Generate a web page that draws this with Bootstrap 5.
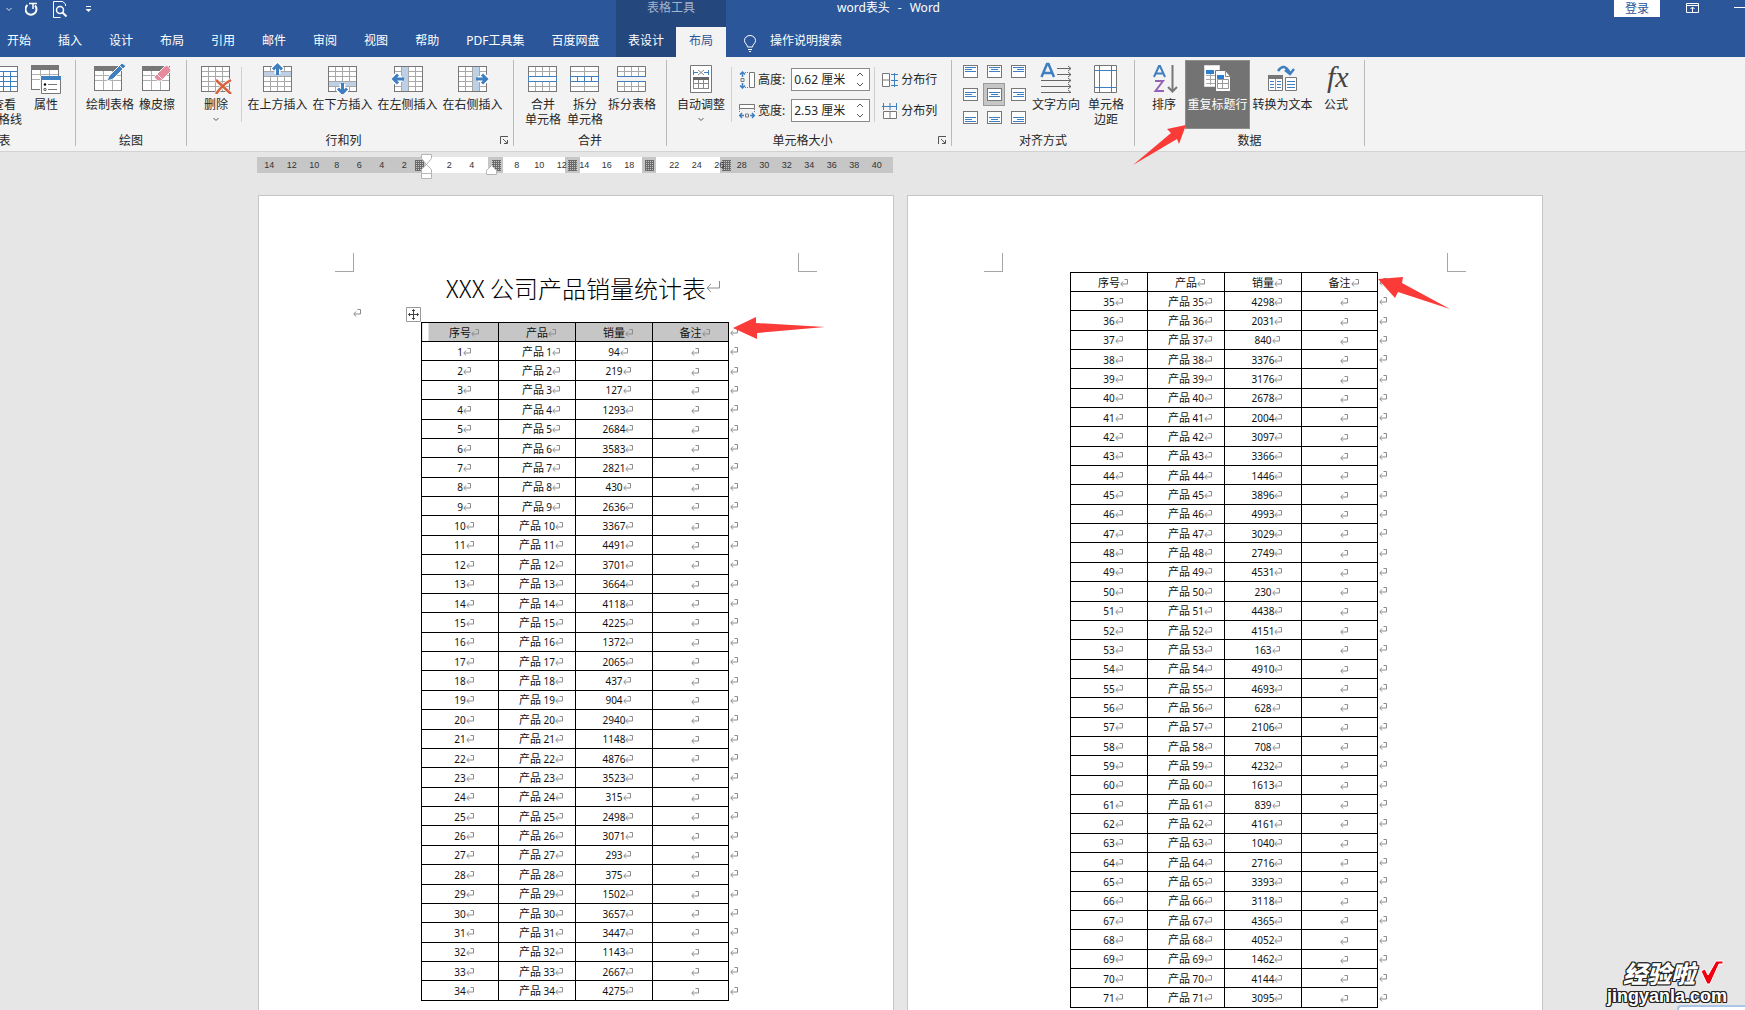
<!DOCTYPE html>
<html lang="zh-CN">
<head>
<meta charset="utf-8">
<meta name="viewport" content="width=device-width, initial-scale=1">
<title>word表头 - Word</title>
<link rel="stylesheet" href="https://cdn.jsdelivr.net/npm/bootstrap@5.3.0/dist/css/bootstrap.min.css">
<style>
body{font-family:"Noto Sans","Noto Sans CJK SC",sans-serif;font-size:12px;line-height:15px;color:#262626;background:#e6e6e6;height:100vh}
svg{display:block;flex:none}
button{border:0;background:none;padding:0;color:inherit;font:inherit}
.w-head{background:#2b579a;color:#fff;flex:none}
.w-left{width:616px}
.w-top{height:27px}
.w-quick{height:18px;padding-left:5px;gap:12px}
.w-tabs{height:30px;gap:27px;padding-left:7px}
.w-tabs a,.w-ctx a,.w-ask{color:#fff;text-decoration:none;white-space:nowrap;line-height:28px}
.w-ctx{background:#24477d}
.w-ctxname{color:#a5b4cd;line-height:15px}
.w-ctx a{padding:0 12px;height:30px}
.w-ctx a.w-on{background:#f3f3f3;color:#2b579a;padding:0 13px}
.w-doc{padding-left:111px;line-height:16px}
.w-ask{padding-left:18px;gap:14px}
.w-login{background:#fff;color:#2b579a;width:46px;height:17px;line-height:16px;margin-right:26px}
.w-min{margin-left:35px}
.w-ribbon{background:#f3f3f3;border-bottom:1px solid #d2d2d2;padding:3px 0 5px;overflow:hidden;flex:none}
.w-strip{margin-left:-66px}
.w-group{height:86px;border-right:1px solid #bababa;flex:none}
.w-body{height:71px}
.w-name{height:15px;line-height:19px}
.w-cmd{height:69px;padding-top:2px;flex:none;white-space:nowrap;display:flex;flex-direction:column;align-items:center;line-height:15px}
.w-cmd svg:first-child{margin-bottom:3px}
.w-42{width:42px}.w-52{width:52px}.w-65{width:65px}.w-48{width:48px}
.w-hot{background:#737373;color:#fff;border:1px solid #8e8e8e;padding-top:1px}
.w-rule{width:1px;height:55px;background:#d0d0d0;margin:7px 7px 0 4px;flex:none}
.w-rule2{margin:7px 3px 0 4px}
.w-size{width:79px;height:23px;border:1px solid #8a8a8a;background:#fff}
.w-size input{border:0;outline:0;width:60px;padding:0 0 0 2px;background:none;color:#262626}
.w-line{height:23px;gap:3px}
.w-line label{margin-right:3px}
.w-align{display:grid;grid-template-columns:repeat(3,24px);grid-auto-rows:23px;margin-left:6px}
.w-align button{display:flex;align-items:center;justify-content:center;width:22px;height:23px;margin-left:1px}
.w-align .w-sel{background:#c6c6c6;border:1px solid #9a9a9a}
.w-work{padding-left:56px;overflow:hidden;min-height:0}
.w-sheets{width:1285px}
.w-ruler{width:636px;height:16px;margin:5px 0 22px -1px;background:#c6c6c6;position:relative}
.w-ruler>svg{position:absolute;left:0;top:-3px}
.w-nums{position:relative;display:grid;grid-template-columns:repeat(28,1fr);padding:0 5px 0 1px;text-align:center;font:9px/17px "Liberation Sans",sans-serif;color:#333}
.w-page{width:636px;height:900px;background:#fff;border:1px solid #c6c6c6;padding-top:57px;flex:none}
.w-corners{padding:0 76px}
.w-corner{width:19px;height:19px;border-bottom:1px solid #a6a6a6}
.w-cl{border-right:1px solid #a6a6a6}.w-cr{border-left:1px solid #a6a6a6}
.w-page h1{font:300 24px/31px "Noto Sans CJK SC",sans-serif;color:#000;margin:0;padding-left:14px;height:34px}
.w-anchor{height:16px;padding-left:94px;gap:45px}
.w-data{margin-left:162px;border-collapse:collapse;font:11px/15px "Noto Sans CJK SC",sans-serif;color:#111;table-layout:fixed;width:320px;text-align:center}
.w-data th,.w-data td{border:1px solid #000;padding:1px 0 0 8px;font-weight:400;white-space:nowrap;height:16px}
.w-data th{height:19px}
.w-data .w-end{border:0;border-left:1px solid #000;padding:0 0 1px 1px;text-align:left}
.w-data svg{display:inline-block;vertical-align:0}
.w-num{font:10px/15px "Noto Sans",sans-serif}
.w-tall1{height:679px}.w-tall2{height:736px}
.w-picked th:not(.w-end){background:#c6c6c6}
.w-picked th:first-child{background:linear-gradient(90deg,#fff 6px,#c6c6c6 6px)}
.w-arrows{position:absolute;left:0;top:0;pointer-events:none}
.w-brand{position:absolute;right:14px;bottom:4px;width:124px;color:#fff;text-shadow:-1px -1px 0 #222,1px -1px 0 #222,-1px 1px 0 #222,1px 1px 0 #222,0 -1px 0 #222,0 1px 0 #222,-1px 0 0 #222,1px 0 0 #222}
.w-brand b{font:italic 900 24px/26px "Noto Sans CJK SC",sans-serif;margin-left:16px}
.w-brand span{font:700 18px/20px "Liberation Sans",sans-serif}
.w-tip{position:absolute;right:0;bottom:0;width:68px;height:5px;background:#fff;border:2px solid #a9c6e8;border-width:2px 0 0 2px;border-radius:4px 0 0 0}
</style>
</head>
<body class="d-flex flex-column overflow-hidden position-relative">
<svg width="0" height="0" class="position-absolute">
<defs>
<symbol id="grid" viewBox="0 0 32 32"><rect x="1.500" y="4.500" width="28" height="25" fill="#fff"/><path d="M8.500 5v24M15.500 5v24M22.500 5v24M2 9.500h27M2 14.500h27M2 19.500h27M2 24.500h27" stroke="#a8a8a8" fill="none"/><rect x="1.500" y="4.500" width="28" height="25" fill="none" stroke="#777"/></symbol>
<symbol id="tbl" viewBox="0 0 32 32"><rect x="1.500" y="4.500" width="27" height="24" fill="#fff"/><path d="M10.500 8v20M19.500 8v20M2 13.500h26M2 18.500h26" stroke="#b0b0b0" fill="none"/><rect x="1.500" y="4.500" width="27" height="24" fill="none" stroke="#777"/><path d="M1 4h28v5H1z" fill="#777"/></symbol>
<symbol id="ret" viewBox="0 0 8 8"><path d="M4.500.5h3v4.500H1M3 2.500L.8 5 3 7.500" fill="none" stroke="#8c8c8c"/></symbol>
<symbol id="dn" viewBox="0 0 8 15"><path d="M1.500 6L4 8.500 6.500 6" fill="none" stroke="#555"/></symbol>
<symbol id="spin" viewBox="0 0 8 21"><path d="M1 7l3-3 3 3M1 14l3 3 3-3" fill="none" stroke="#555"/></symbol>
<symbol id="launch" viewBox="0 0 9 9"><path d="M.5 8V.5H8M3 3l4 4M7.500 4v3.500H4" fill="none" stroke="#555"/></symbol>
<symbol id="cell" viewBox="0 0 15 13"><rect x=".5" y=".5" width="14" height="12" fill="#fff" stroke="#777"/></symbol>
<pattern id="dots" width="2" height="2" patternUnits="userSpaceOnUse"><path d="M0 .5h2M.5 0v2" stroke="#6a6a6a"/></pattern>
</defs></svg>

<header class="w-head d-flex">
  <div class="w-left">
    <div class="w-top"><div class="w-quick d-flex align-items-center">
      <svg width="8" height="15"><path d="M1.500 6L4 8.500 6.500 6" fill="none" stroke="#dfe6f1"/></svg>
      <button type="button" aria-label="重做"><svg width="15" height="16" viewBox="0 0 15 16"><path d="M2.500 4A5.500 5.500 0 1 0 10 4.500" fill="none" stroke="#fff" stroke-width="2"/><path d="M4 2.500h8M8 2v6" fill="none" stroke="#fff" stroke-width="1.500"/></svg></button>
      <button type="button" aria-label="打印预览"><svg width="19" height="18" viewBox="-1 0 19 18"><path d="M12.500 6V4l-3-2.500H.5v16h7" fill="none" stroke="#fff"/><circle cx="7" cy="10" r="3.500" fill="none" stroke="#fff" stroke-width="1.500"/><path d="M9.500 12.500l4 4" stroke="#fff" stroke-width="2"/></svg></button>
      <button type="button" aria-label="自定义快速访问工具栏"><svg width="11" height="9"><path d="M3 1.500h5" stroke="#fff"/><path d="M2.500 4h6L5.500 7z" fill="#fff"/></svg></button>
    </div></div>
    <nav class="w-tabs d-flex">
      <a href="#">开始</a><a href="#">插入</a><a href="#">设计</a><a href="#">布局</a><a href="#">引用</a><a href="#">邮件</a><a href="#">审阅</a><a href="#">视图</a><a href="#">帮助</a><a href="#">PDF工具集</a><a href="#">百度网盘</a>
    </nav>
  </div>
  <div class="w-ctx">
    <div class="w-top w-ctxname text-center">表格工具</div>
    <nav class="d-flex"><a href="#">表设计</a><a href="#" class="w-on">布局</a></nav>
  </div>
  <div class="flex-fill">
    <div class="w-top d-flex">
      <div class="w-doc">word表头<span class="mx-2">-</span>Word</div>
      <button type="button" class="w-login ms-auto">登录</button>
      <button type="button" aria-label="功能区显示选项" class="align-self-start"><svg width="13" height="14" viewBox="0 0 13 14"><path d="M.5 3.500h12v9H.5zM1 5.500h11M6.500 12V7.500M4.500 9l2-2 2 2" fill="none" stroke="#fff"/></svg></button>
      <button type="button" aria-label="最小化" class="w-min align-self-start"><svg width="11" height="14"><path d="M0 7.500h11" stroke="#fff"/></svg></button>
    </div>
    <a href="#" class="w-ask d-flex"><svg class="mt-2" width="12" height="17" viewBox="0 0 12 17"><path d="M3.500 12c0-3-3-3-3-6.500a5.500 5 0 0 1 11 0c0 3.500-3 3.500-3 6.500zM4 14.500h4M5 16.500h2" fill="none" stroke="#fff"/></svg>操作说明搜索</a>
  </div>
</header>

<section class="w-ribbon"><div class="w-strip d-flex">
  <div class="w-group" style="width:142px">
    <div class="w-body d-flex justify-content-end pe-2">
      <button type="button" class="w-cmd w-42"><svg width="32" height="32"><rect x="1.500" y="4.500" width="28" height="25" fill="#fff" stroke="#777"/><path d="M8.500 9v20M15.500 9v20M22.500 9v20M2 9.500h27M2 14.500h27M2 19.500h27M2 24.500h27" stroke="#3f7fbf"/></svg>查看<br>网格线</button>
      <button type="button" class="w-cmd w-42"><svg width="32" height="32"><use href="#tbl" width="32" height="32" y="-1"/><path d="M10 14h22v19H10z" fill="#f3f3f3"/><path d="M11.500 14.500h19v17h-19z" fill="#fff" stroke="#777"/><path d="M11 14h20v4H11z" fill="#3f7fbf"/><circle cx="15" cy="22.500" r="1.200"/><circle cx="15" cy="27.500" r="1.200" fill="none" stroke="#555"/><path d="M18 22.500h9M18 27.500h9" stroke="#777"/></svg>属性</button>
    </div>
    <div class="w-name text-center">表</div>
  </div>
  <div class="w-group" style="width:111px">
    <div class="w-body d-flex ps-2">
      <button type="button" class="w-cmd w-52"><svg width="36" height="32"><use href="#tbl" width="32" height="32" x="1"/><path d="M15 19l2-5L30 1l4 3-13 13z" fill="#3f7fbf" stroke="#f3f3f3"/><path d="M27 3l4 4" stroke="#f3f3f3"/></svg>绘制表格</button>
      <button type="button" class="w-cmd w-42"><svg width="32" height="32"><use href="#tbl" width="32" height="32"/><path d="M14 14L24 4q2-1 3 0l3 4q0 1-1 2l-9 9h-3l-4-4z" fill="#e68a9c" stroke="#f3f3f3"/><path d="M16 12l6 6" stroke="#f3f3f3"/></svg>橡皮擦</button>
    </div>
    <div class="w-name text-center">绘图</div>
  </div>
  <div class="w-group" style="width:327px">
    <div class="w-body d-flex ps-2">
      <button type="button" class="w-cmd w-42"><svg width="32" height="32"><use href="#grid" width="32" height="32"/><path d="M16 18l15 14M31 18q-9 5-15 14" stroke="#f3f3f3" stroke-width="4"/><path d="M16 18l15 14M31 18q-9 5-15 14" fill="none" stroke="#d8603c" stroke-width="2.500"/></svg>删除<svg width="8" height="15"><use href="#dn"/></svg></button>
      <div class="w-rule w-rule2"></div>
      <button type="button" class="w-cmd w-65"><svg width="32" height="32"><use href="#grid" width="32" height="32"/><path d="M2 10h27v4H2z" fill="#bdd0e6"/><path d="M15.500 12V4M11 7.500L15.500 3 20 7.500" stroke="#fff" stroke-width="6" fill="none"/><path d="M15.500 13V4M11 7.500L15.500 3 20 7.500" stroke="#3f7fbf" stroke-width="3" fill="none"/></svg>在上方插入</button>
      <button type="button" class="w-cmd w-65"><svg width="32" height="32"><use href="#grid" width="32" height="32"/><path d="M2 20h27v4H2z" fill="#bdd0e6"/><path d="M15.500 22v8M11 26.500l4.500 4.500 4.500-4.500" stroke="#fff" stroke-width="6" fill="none"/><path d="M15.500 21v9M11 26.500l4.500 4.500 4.500-4.500" stroke="#3f7fbf" stroke-width="3" fill="none"/></svg>在下方插入</button>
      <button type="button" class="w-cmd w-65"><svg width="32" height="32"><use href="#grid" width="32" height="32" x="1"/><path d="M10 5h6v24h-6z" fill="#bdd0e6"/><path d="M10 17H2M6 12.500L1.500 17 6 21.500" stroke="#fff" stroke-width="6" fill="none"/><path d="M12 17H2M6 12.500L1.500 17 6 21.500" stroke="#3f7fbf" stroke-width="3" fill="none"/></svg>在左侧插入</button>
      <button type="button" class="w-cmd w-65"><svg width="32" height="32"><use href="#grid" width="32" height="32"/><path d="M16 5h6v24h-6z" fill="#bdd0e6"/><path d="M21 17h8M25 12.500l4.500 4.500-4.500 4.500" stroke="#fff" stroke-width="6" fill="none"/><path d="M19 17h10M25 12.500l4.500 4.500-4.500 4.500" stroke="#3f7fbf" stroke-width="3" fill="none"/></svg>在右侧插入</button>
    </div>
    <div class="w-name d-flex"><span class="flex-fill text-center">行和列</span><button type="button" aria-label="行和列设置" class="pe-1 pt-1"><svg width="9" height="9"><use href="#launch"/></svg></button></div>
  </div>
  <div class="w-group" style="width:153px">
    <div class="w-body d-flex ps-2">
      <button type="button" class="w-cmd w-42"><svg width="32" height="32"><use href="#grid" width="32" height="32"/><path d="M1.500 14.500h28v5h-28z" fill="#fff" stroke="#3f7fbf"/></svg>合并<br>单元格</button>
      <button type="button" class="w-cmd w-42"><svg width="32" height="32"><rect x="1.500" y="4.500" width="28" height="25" fill="#fff"/><path d="M15.500 5v24M2 9.500h27M2 24.500h27" stroke="#a8a8a8"/><rect x="1.500" y="4.500" width="28" height="25" fill="none" stroke="#777"/><path d="M1.500 14.500h28v5h-28zM8.500 15v4M15.500 15v4M22.500 15v4" fill="#fff" stroke="#3f7fbf"/></svg>拆分<br>单元格</button>
      <button type="button" class="w-cmd w-52"><svg width="32" height="32"><path d="M1.500 14V4.500h28V14M1.500 20v9.500h28V20" fill="#fff" stroke="#777"/><path d="M8.500 5v9M15.500 5v9M22.500 5v9M8.500 20v9M15.500 20v9M22.500 20v9M2 9.500h27M2 24.500h27" stroke="#a8a8a8"/><path d="M1 14.500h29M1 19.500h29" stroke="#3f7fbf"/></svg>拆分表格</button>
    </div>
    <div class="w-name text-center">合并</div>
  </div>
  <div class="w-group" style="width:285px">
    <div class="w-body d-flex ps-2">
      <button type="button" class="w-cmd w-52"><svg width="32" height="32"><path d="M5.500 3.500h21v27h-21z" fill="#fff" stroke="#777"/><path d="M8.500 8v5M23.500 8v5M9 10.500h4M19 10.500h4" stroke="#3f7fbf"/><path d="M13 8l6 5M19 8l-6 5" stroke="#888"/><rect x="8.500" y="16.500" width="15" height="10" fill="#fff" stroke="#888"/><path d="M13.500 17v9M18.500 17v9M9 21.500h14" stroke="#888"/><path d="M8 15h16v3H8z" fill="#666"/></svg>自动调整<svg width="8" height="15"><use href="#dn"/></svg></button>
      <div class="w-rule"></div>
      <div class="d-flex flex-column gap-2 pt-2">
        <div class="w-line d-flex align-items-center"><svg width="16" height="18"><path d="M10.500 1.500h5v15h-5z" fill="#fff" stroke="#777"/><path d="M3.500 1v5M3.500 12v5M1 3.500L3.500 1 6 3.500M1 14.500L3.500 17 6 14.500" fill="none" stroke="#3f7fbf" stroke-width="1.500"/><path d="M2 7.500h3v3H2z" fill="none" stroke="#777"/><path d="M6 1.500h4M6 16.500h4" stroke="#777" stroke-dasharray="1 1"/></svg><label for="cellH">高度:</label><div class="w-size d-flex align-items-center"><input id="cellH" value="0.62 厘米"><svg class="ms-1" width="8" height="21"><use href="#spin"/></svg></div></div>
        <div class="w-line d-flex align-items-center"><svg width="16" height="18"><path d="M.5 2.500h15v4H.5z" fill="#fff" stroke="#777"/><path d="M0 13.500h5M11 13.500h5M3 11L.8 13.500 3 16M13 11l2.200 2.500L13 16" fill="none" stroke="#3f7fbf" stroke-width="1.500"/><path d="M6.500 12h3v3h-3z" fill="none" stroke="#777"/><path d="M.5 7v4M15.500 7v4" stroke="#777" stroke-dasharray="1 1"/></svg><label for="cellW">宽度:</label><div class="w-size d-flex align-items-center"><input id="cellW" value="2.53 厘米"><svg class="ms-1" width="8" height="21"><use href="#spin"/></svg></div></div>
      </div>
      <div class="w-rule"></div>
      <div class="d-flex flex-column gap-2 pt-2">
        <button type="button" class="w-line d-flex align-items-center"><svg width="16" height="16"><path d="M.5 1.500h7v13h-7zM1 8h6" fill="#fff" stroke="#777"/><path d="M12.500 1v14M9 2.500h7M9 8.500h7M9 13.500h7" stroke="#3f7fbf"/></svg>分布行</button>
        <button type="button" class="w-line d-flex align-items-center"><svg width="16" height="16"><path d="M1.500 8.500h13v7h-13zM8 9v6" fill="#fff" stroke="#777"/><path d="M0 3.500h15M1.500 0v7M8 0v7M14.500 0v7" stroke="#3f7fbf"/></svg>分布列</button>
      </div>
    </div>
    <div class="w-name d-flex"><span class="flex-fill text-center">单元格大小</span><button type="button" aria-label="单元格大小设置" class="pe-1 pt-1"><svg width="9" height="9"><use href="#launch"/></svg></button></div>
  </div>
  <div class="w-group" style="width:183px">
    <div class="w-body d-flex">
      <div class="w-align" id="alignBox"></div>
      <button type="button" class="w-cmd w-52"><svg width="32" height="32" viewBox="0 0 32 32"><path d="M1.500 15L7 2h1.500L14 15M4 11h8" fill="none" stroke="#3f7fbf" stroke-width="2.500"/><path d="M17 6.500h14M17 12.500h14M1 18.500h30M1 24.500h30M1 30.500h30M28 4l3 2.500L28 9M28 10l3 2.500-3 2.500M28 16l3 2.500-3 2.500M28 22l3 2.500-3 2.500M28 28l3 2.500" fill="none" stroke="#666"/></svg>文字方向</button>
      <button type="button" class="w-cmd w-48"><svg width="32" height="32"><path d="M4.500 3.500h22v27h-22z" fill="#fff" stroke="#777"/><path d="M9.500 4v26M21.500 4v26M5 8.500h21M5 25.500h21" stroke="#3f7fbf"/></svg>单元格<br>边距</button>
    </div>
    <div class="w-name text-center">对齐方式</div>
  </div>
  <div class="w-group" style="width:230px">
    <div class="w-body d-flex ps-2">
      <button type="button" class="w-cmd w-42"><svg width="32" height="32" viewBox="0 0 32 32"><path d="M6 15L11 4h1L17 15M8 11.500h7" fill="none" stroke="#3f7fbf" stroke-width="2"/><path d="M7 19h8L7.500 29H16" fill="none" stroke="#9662b5" stroke-width="2"/><path d="M24.500 3v26M20 25l4.500 4.500L29 25" fill="none" stroke="#777" stroke-width="2"/></svg>排序</button>
      <button type="button" class="w-cmd w-65 w-hot"><svg width="32" height="32"><path d="M2.500 3.500h15v21h-15z" fill="#fff" stroke="#ddd"/><path d="M4 8h8v4H4z" fill="#2f7fd0"/><path d="M4 13.500h12M4 17.500h12M4 21.500h12M8.500 12v11" stroke="#aaa"/><path d="M13.500 8.500h10l5 6v15h-15z" fill="#fff" stroke="#737373"/><path d="M23.500 8.500v6h5" fill="none" stroke="#888"/><path d="M15 13h7v4h-7z" fill="#2f7fd0"/><path d="M15.500 17.500h11v9h-11zM20.500 17v9M15 21.500h12" fill="none" stroke="#999"/></svg>重复标题行</button>
      <button type="button" class="w-cmd w-65"><svg width="32" height="32"><path d="M1.500 13.500h14v15h-14z" fill="#fff" stroke="#777"/><path d="M1 13h15v4H1z" fill="#777"/><path d="M8.500 17v11" stroke="#999"/><path d="M3 19.500h4M3 22.500h4M3 25.500h4M10 19.500h4M10 22.500h4M10 25.500h4" stroke="#3f7fbf"/><path d="M18.500 15.500h11v13h-11z" fill="#fff" stroke="#777"/><path d="M20 19.500h8M20 22.500h8M20 25.500h8" stroke="#3f7fbf"/><path d="M11 9Q17 0 23 11M18 8l5 4 4-5" fill="none" stroke="#3f7fbf" stroke-width="2.500"/></svg>转换为文本</button>
      <button type="button" class="w-cmd w-42"><svg width="32" height="32"><text x="7" y="25" font-family="Liberation Serif" font-style="italic" font-size="30" fill="#444">fx</text></svg>公式</button>
    </div>
    <div class="w-name text-center">数据</div>
  </div>
</div></section>

<main class="w-work flex-fill d-flex justify-content-center">
  <div class="w-sheets flex-shrink-0">
    <div class="w-ruler">
      <svg width="636" height="27" viewBox="0 0 636 27"><path d="M169 3h62v16h-62zM246 3h62v16h-62zM323 3h62v16h-62zM399 3h64v16h-64z" fill="#fff"/>
      <path d="M158 6h9v11h-9zM235 6h9v11h-9zM311 6h9v11h-9zM388 6h9v11h-9zM465 6h9v11h-9z" fill="url(#dots)"/>
      <path d="M164.500.5h10v4l-5 6 5 5v9h-10v-9l5-5-5-6zM164.500 19.500h10M229.500 20.500v-4l5-5 5 5v4z" fill="#fff" stroke="#b5b5b5"/></svg>
      <div class="w-nums" id="nums"></div>
    </div>
    <div class="d-flex justify-content-between">
      <article class="w-page">
        <div class="w-corners d-flex justify-content-between"><div class="w-corner w-cl"></div><div class="w-corner w-cr"></div></div>
        <h1 class="d-flex justify-content-center">XXX 公司产品销量统计表<svg class="mt-2" width="14" height="14" viewBox="0 0 14 14"><path d="M13.500 1v7H1M5 4L1 8l4 4" fill="none" stroke="#8c8c8c"/></svg></h1>
        <div class="w-anchor d-flex"><svg width="8" height="12"><use href="#ret" width="8" height="8" y="3"/></svg><svg width="15" height="16" viewBox="0 -1 15 16"><path d="M.5.5h14v14H.5z" fill="#fff" stroke="#999"/><path d="M7.500 2.500v10M2.500 7.500h10M6 4l1.500-1.500L9 4M6 11l1.500 1.500L9 11M4 6L2.500 7.500 4 9M11 6l1.500 1.500L11 9" fill="none" stroke="#444"/></svg></div>
        <table class="w-data w-tall1" id="sheet1"></table>
      </article>
      <article class="w-page">
        <div class="w-corners d-flex justify-content-between"><div class="w-corner w-cl"></div><div class="w-corner w-cr"></div></div>
        <table class="w-data w-tall2" id="sheet2"></table>
      </article>
    </div>
  </div>
</main>

<svg class="w-arrows" width="1745" height="1010"><path d="M1186 125l-19 4 4 4-38 32 44-26 2 5zM733 328l23-11v6l69 4-68 6v6zM1378 279l25-2-1 6 48 26-52-17-3 6z" fill="#fb3b38"/></svg>
<div class="w-tip"></div>
<div class="w-brand d-flex flex-column"><div class="d-flex align-items-center"><b>经验啦</b><svg class="ms-1" width="26" height="26" viewBox="0 0 26 26"><path d="M2 11l4-2 3 6L17 1h7v3h-4L11 24H8z" fill="#f00010" stroke="#fff"/></svg></div><span>jingyanla.com</span></div>

<script>
const ret = '<svg width="8" height="8"><use href="#ret"/></svg>';
const sales1 = [94,219,127,1293,2684,3583,2821,430,2636,3367,4491,3701,3664,4118,4225,1372,2065,437,904,2940,1148,4876,3523,315,2498,3071,293,375,1502,3657,3447,1143,2667,4275];
const sales2 = [4298,2031,840,3376,3176,2678,2004,3097,3366,1446,3896,4993,3029,2749,4531,230,4438,4151,163,4910,4693,628,2106,708,4232,1613,839,4161,1040,2716,3393,3118,4365,4052,1462,4144,3095];
function fill(id, first, sales, headClass) {
  const num = n => `<span class="w-num">${n}</span>`;
  const row = (tag, cells) => cells.map(c => `<${tag}>${c}${ret}</${tag}>`).join('') + `<${tag} class="w-end">${ret}</${tag}>`;
  document.getElementById(id).innerHTML =
    '<colgroup><col style="width:77px"><col style="width:77px"><col style="width:77px"><col style="width:76px"><col></colgroup>' +
    `<thead><tr class="${headClass}">${row('th', ['序号', '产品', '销量', '备注'])}</tr></thead><tbody>` +
    sales.map((s, i) => `<tr>${row('td', [num(first + i), '产品 ' + num(first + i), num(s), ''])}</tr>`).join('') + '</tbody>';
}
fill('sheet1', 1, sales1, 'w-picked');
fill('sheet2', 35, sales2, '');

// ruler labels: zero and the columns under the markers (right 6 and 20) stay blank
let marks = '';
for (let n = -14; n <= 40; n += 2) marks += `<span>${[0, 6, 20].includes(n) ? '' : Math.abs(n)}</span>`;
document.getElementById('nums').innerHTML = marks;

// nine alignment buttons: text block at top/middle/bottom and left/centre/right
let buttons = '';
const names = ['靠上', '中部', '靠下'], sides = ['左对齐', '居中', '右对齐'];
for (let r = 0; r < 3; r++) for (let c = 0; c < 3; c++) {
  const y = [2.5, 4.5, 6.5][r], lines = [11, 7, 11].map((w, i) => {
    const x = c === 0 ? 2 : c === 1 ? 7.5 - w / 2 : 13 - w;
    return `M${x} ${y + i * 2}h${w}`;
  }).join('');
  buttons += `<button type="button" aria-label="${names[r]}${sides[c]}" class="${r === 1 && c === 1 ? 'w-sel' : ''}"><svg width="15" height="13"><use href="#cell"/><path d="${lines}" stroke="#3f7fbf"/></svg></button>`;
}
document.getElementById('alignBox').innerHTML = buttons;
</script>
<script src="https://cdn.jsdelivr.net/npm/bootstrap@5.3.0/dist/js/bootstrap.bundle.min.js"></script>
</body>
</html>
